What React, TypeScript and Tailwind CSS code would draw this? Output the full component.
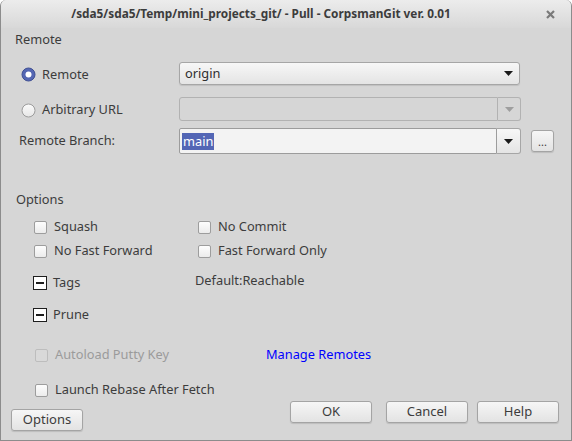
import React from "react";

function Radio({ checked }: { checked?: boolean }) {
  return (
    <svg width="15" height="15" viewBox="0 0 15 15" className="shrink-0">
      {checked ? (
        <>
          <circle cx="7.5" cy="7.5" r="6.5" fill="#5567b3" stroke="#3f4f93" strokeWidth="1" />
          <circle cx="7.5" cy="7.5" r="3" fill="#ffffff" />
        </>
      ) : (
        <>
          <defs>
            <linearGradient id="rg" x1="0" y1="0" x2="0" y2="1">
              <stop offset="0" stopColor="#fbfbfb" />
              <stop offset="1" stopColor="#e6e6e6" />
            </linearGradient>
          </defs>
          <circle cx="7.5" cy="7.5" r="6.5" fill="url(#rg)" stroke="#9c9c9c" strokeWidth="1" />
        </>
      )}
    </svg>
  );
}

function Check({ disabled }: { disabled?: boolean }) {
  return (
    <span
      className={
        disabled
          ? "w-[13px] h-[13px] shrink-0 rounded-[2px] border border-[#bdbdbd] bg-[#d9d9d9]"
          : "w-[13px] h-[13px] shrink-0 rounded-[2px] border border-[#9d9d9d] bg-gradient-to-b from-[#fdfdfd] to-[#ececec]"
      }
    />
  );
}

function Tri() {
  return (
    <span className="w-[14px] h-[14px] shrink-0 border border-[#1e1e1e] bg-white flex items-center justify-center">
      <span className="w-[8px] h-[2px] bg-[#1e1e1e]" />
    </span>
  );
}

function Arrow({ gray }: { gray?: boolean }) {
  return (
    <svg width="9" height="5" viewBox="0 0 9 5">
      <path d="M0 0 H9 L4.5 5 Z" fill={gray ? "#9e9e9e" : "#1a1a1a"} />
    </svg>
  );
}

function Btn({ children, className }: { children: React.ReactNode; className: string }) {
  return (
    <div
      className={
        "flex items-center justify-center rounded-[3px] border border-[#a4a4a4] bg-gradient-to-b from-[#f6f6f6] to-[#e3e3e3] shadow-[0_1px_1px_rgba(0,0,0,0.12)] text-[13px] text-[#3c3c3c] " +
        className
      }
    >
      {children}
    </div>
  );
}

function CheckRow({ label, disabled }: { label: string; disabled?: boolean }) {
  return (
    <div className="flex items-center gap-[7px] h-[24px]">
      <Check disabled={disabled} />
      <span className={disabled ? "text-[#9b9b9b]" : ""}>{label}</span>
    </div>
  );
}

export default function App() {
  return (
    <div
      className="w-[572px] h-[441px] flex flex-col rounded-t-[6px] border-x border-b border-[#8c8c8c] bg-[#d6d6d6] text-[12.8px] text-[#3c3c3c] overflow-hidden"
      style={{ fontFamily: '"Noto Sans", "Open Sans", sans-serif' }}
    >
      {/* title bar */}
      <div className="h-[28px] shrink-0 flex items-center bg-gradient-to-b from-[#ececec] to-[#d8d8d8]">
        <div className="flex-1 text-center font-bold text-[11.8px] text-[#3c3c3c] pr-[8px]">
          /sda5/sda5/Temp/mini_projects_git/ - Pull - CorpsmanGit ver. 0.01
        </div>
        <div className="w-[42px] flex justify-center">
          <svg width="9" height="9" viewBox="0 0 9 9">
            <path d="M1 1 L8 8 M8 1 L1 8" stroke="#7a7a7a" strokeWidth="2.2" />
          </svg>
        </div>
      </div>

      {/* body */}
      <div className="flex-1 flex flex-col">
        <div className="h-[18px] mt-[3px] pl-[14px] flex items-center">Remote</div>

        {/* remote radio */}
        <div className="h-[23px] mt-[13px] flex items-center">
          <div className="w-[178px] pl-[20px] flex items-center gap-[6px] pt-[2px]">
            <Radio checked />
            <span>Remote</span>
          </div>
          <div className="w-[341px] h-full rounded-[3px] border border-[#a6a6a6] bg-gradient-to-b from-[#f7f7f7] to-[#e4e4e4] shadow-[0_1px_1px_rgba(0,0,0,0.1)] flex items-center pl-[5px] pr-[6px] text-[#2e2e2e]">
            <span className="flex-1">origin</span>
            <Arrow />
          </div>
        </div>

        {/* arbitrary url */}
        <div className="h-[24px] mt-[12px] flex items-center">
          <div className="w-[178px] pl-[20px] flex items-center gap-[6px] pt-[2px]">
            <Radio />
            <span>Arbitrary URL</span>
          </div>
          <div className="w-[319px] h-full rounded-l-[3px] border border-[#b2b2b2] bg-[#d6d6d6]" />
          <div className="w-[23px] h-full rounded-r-[3px] border border-l-0 border-[#b2b2b2] bg-[#d6d6d6] flex items-center justify-center">
            <Arrow gray />
          </div>
        </div>

        {/* remote branch */}
        <div className="h-[26px] mt-[7px] flex items-center">
          <div className="w-[178px] pl-[18px]">Remote Branch:</div>
          <div className="w-[318px] h-full rounded-l-[2px] border border-[#9c9c9c] bg-[#f3f3f3] flex items-center pl-[2px]">
            <span className="bg-[#5366b5] text-white leading-[17px] px-[1px]">main</span>
          </div>
          <div className="w-[24px] h-full rounded-r-[3px] border border-l-0 border-[#a6a6a6] bg-gradient-to-b from-[#f7f7f7] to-[#e4e4e4] flex items-center justify-center">
            <Arrow />
          </div>
          <Btn className="ml-[10px] w-[23px] h-[22px] !text-[11px] leading-none">...</Btn>
        </div>

        <div className="h-[18px] mt-[37px] pl-[15px] flex items-center">Options</div>

        {/* option checkboxes */}
        <div className="mt-[6px] pl-[33px] flex flex-col">
          <div className="flex">
            <div className="w-[164px]"><CheckRow label="Squash" /></div>
            <CheckRow label="No Commit" />
          </div>
          <div className="flex">
            <div className="w-[164px]"><CheckRow label="No Fast Forward" /></div>
            <CheckRow label="Fast Forward Only" />
          </div>
          <div className="flex mt-[8px] -ml-[1px]">
            <div className="w-[162px] h-[24px] flex items-center gap-[6px]">
              <Tri />
              <span>Tags</span>
            </div>
            <div className="h-[18px] leading-[18px]">Default:Reachable</div>
          </div>
          <div className="flex mt-[8px] -ml-[1px]">
            <div className="w-[162px] h-[24px] flex items-center gap-[6px]">
              <Tri />
              <span>Prune</span>
            </div>
          </div>
        </div>

        {/* autoload */}
        <div className="mt-[16px] pl-[34px] flex items-center">
          <div className="w-[231px]"><CheckRow label="Autoload Putty Key" disabled /></div>
          <span className="text-[#0000ff]">Manage Remotes</span>
        </div>

        {/* bottom */}
        <div className="mt-[11px] flex">
          <div className="flex flex-col">
            <div className="pl-[34px]"><CheckRow label="Launch Rebase After Fetch" /></div>
            <Btn className="ml-[10px] mt-[7px] w-[72px] h-[22px]">Options</Btn>
          </div>
          <div className="ml-auto mr-[12px] mt-[23px] flex">
            <Btn className="w-[82px] h-[22px]">OK</Btn>
            <Btn className="ml-[14px] w-[82px] h-[22px]">Cancel</Btn>
            <Btn className="ml-[9px] w-[82px] h-[22px]">Help</Btn>
          </div>
        </div>
      </div>
    </div>
  );
}
